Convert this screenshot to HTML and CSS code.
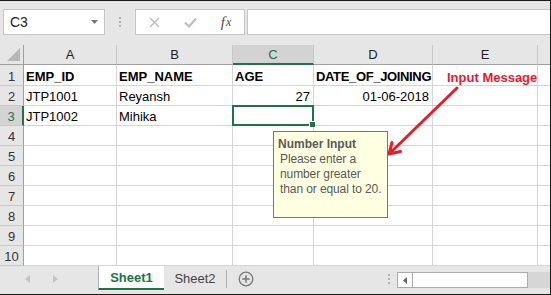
FILE: index.html
```html
<!DOCTYPE html>
<html lang="en">
<head>
    <meta charset="UTF-8">
    <title>Data Validation - Input Message</title>
    <link rel="stylesheet" href="styles.css">
</head>
<body>
    <div class="frame">
        <div class="formula-bar">
            <div class="name-box">
                <span>C3</span>
                <svg class="caret" width="7" height="4" viewBox="0 0 7 4"><polygon points="0,0 7,0 3.5,4" fill="#777"/></svg>
            </div>
            <div class="grip"><i></i><i></i><i></i></div>
            <div class="fn-buttons">
                <span class="slot">
                    <svg width="11" height="11" viewBox="0 0 11 11"><path d="M1 1 L10 10 M10 1 L1 10" stroke="#bcbcbc" stroke-width="1.4"/></svg>
                </span>
                <span class="slot">
                    <svg width="13" height="11" viewBox="0 0 13 11"><path d="M1 5.5 L5 9.5 L12 1.5" stroke="#bcbcbc" stroke-width="2" fill="none"/></svg>
                </span>
                <span class="slot fx">f<small>x</small></span>
            </div>
            <div class="formula-input"></div>
        </div>

        <div class="sheet">
            <div class="corner">
                <svg width="24" height="20" viewBox="0 0 24 20"><polygon points="20,3 20,16 7,16" fill="#b7b7b7"/></svg>
            </div>
            <div class="col-head">A</div>
            <div class="col-head">B</div>
            <div class="col-head active">C</div>
            <div class="col-head">D</div>
            <div class="col-head">E</div>
            <div class="col-head last"></div>

            <div class="row-head">1</div>
            <div class="cell bold">EMP_ID</div>
            <div class="cell bold">EMP_NAME</div>
            <div class="cell bold">AGE</div>
            <div class="cell bold tight">DATE_OF_JOINING</div>
            <div class="cell"></div>
            <div class="cell last"></div>

            <div class="row-head">2</div>
            <div class="cell">JTP1001</div>
            <div class="cell">Reyansh</div>
            <div class="cell num">27</div>
            <div class="cell num">01-06-2018</div>
            <div class="cell"></div>
            <div class="cell last"></div>

            <div class="row-head active">3</div>
            <div class="cell">JTP1002</div>
            <div class="cell">Mihika</div>
            <div class="cell selected"><span class="sel-box"><span class="handle"></span></span></div>
            <div class="cell"></div>
            <div class="cell"></div>
            <div class="cell last"></div>

            <div class="row-head">4</div>
            <div class="cell"></div><div class="cell"></div><div class="cell"></div><div class="cell"></div><div class="cell"></div><div class="cell last"></div>
            <div class="row-head">5</div>
            <div class="cell"></div><div class="cell"></div><div class="cell"></div><div class="cell"></div><div class="cell"></div><div class="cell last"></div>
            <div class="row-head">6</div>
            <div class="cell"></div><div class="cell"></div><div class="cell"></div><div class="cell"></div><div class="cell"></div><div class="cell last"></div>
            <div class="row-head">7</div>
            <div class="cell"></div><div class="cell"></div><div class="cell"></div><div class="cell"></div><div class="cell"></div><div class="cell last"></div>
            <div class="row-head">8</div>
            <div class="cell"></div><div class="cell"></div><div class="cell"></div><div class="cell"></div><div class="cell"></div><div class="cell last"></div>
            <div class="row-head">9</div>
            <div class="cell"></div><div class="cell"></div><div class="cell"></div><div class="cell"></div><div class="cell"></div><div class="cell last"></div>
            <div class="row-head">10</div>
            <div class="cell"></div><div class="cell"></div><div class="cell"></div><div class="cell"></div><div class="cell"></div><div class="cell last"></div>
        </div>

        <div class="tab-bar">
            <div class="tab-nav">
                <svg width="5" height="8" viewBox="0 0 5 8"><polygon points="5,0 5,8 0,4" fill="#c3c3c3"/></svg>
                <svg width="5" height="8" viewBox="0 0 5 8"><polygon points="0,0 0,8 5,4" fill="#c3c3c3"/></svg>
            </div>
            <div class="tab current">Sheet1</div>
            <div class="tab">Sheet2</div>
            <div class="add-sheet">
                <svg width="16" height="16" viewBox="0 0 16 16"><circle cx="8" cy="8" r="6.8" fill="none" stroke="#7a7a7a" stroke-width="1.3"/><path d="M8 4.2 V11.8 M4.2 8 H11.8" stroke="#7a7a7a" stroke-width="1.6"/></svg>
            </div>
            <div class="spacer"></div>
            <div class="grip small"><i></i><i></i><i></i></div>
            <div class="hscroll">
                <span class="scroll-btn">
                    <svg width="4" height="7" viewBox="0 0 4 7"><polygon points="4,0 4,7 0,3.5" fill="#666"/></svg>
                </span>
                <span class="thumb"></span>
                <span class="track"></span>
            </div>
        </div>

        <div class="tooltip">
            <b>Number Input</b>
            <p>Please enter a<br>number greater<br>than or equal to 20.</p>
        </div>

        <div class="note">Input Message</div>
        <svg class="arrow" width="551" height="295" viewBox="0 0 551 295">
            <path d="M457 88 L389 154 M389 154 L392 142.5 M389 154 L400.5 151.5" stroke="#e61d2b" stroke-width="3" stroke-linecap="round" fill="none"/>
        </svg>
    </div>
</body>
</html>
```

FILE: styles.css
```css
* {
    box-sizing: border-box;
}
body {
    margin: 0;
    font-family: 'Liberation Sans', Arial, sans-serif;
    font-size: 13px;
    color: #000;
    background-color: #fff;
}
.frame {
    position: relative;
    width: 551px;
    height: 295px;
    background-color: #e6e6e6;
    border-top: 1px solid #1a1a1a;
    border-right: 1px solid #1a1a1a;
    border-bottom: 1px solid #1a1a1a;
    overflow: hidden;
}

/* formula bar */
.formula-bar {
    display: flex;
    align-items: flex-start;
    height: 44px;
    padding-top: 8px;
}
.name-box {
    display: flex;
    align-items: center;
    justify-content: space-between;
    width: 102px;
    height: 26px;
    margin-left: 3px;
    padding: 0 6px 0 6px;
    background-color: #fff;
    border: 1px solid #c6c6c6;
    color: #222;
    font-size: 14px;
}
.grip {
    display: flex;
    flex-direction: column;
    align-items: center;
    justify-content: center;
    gap: 2px;
    width: 30px;
    height: 26px;
}
.grip i {
    display: block;
    width: 2px;
    height: 2px;
    background-color: #b3b3b3;
}
.fn-buttons {
    display: flex;
    width: 110px;
    height: 26px;
    background-color: #fff;
    border: 1px solid #c6c6c6;
}
.slot {
    display: flex;
    align-items: center;
    justify-content: center;
    width: 36px;
}
.fx {
    font-family: 'Liberation Serif', serif;
    font-style: italic;
    font-size: 15px;
    color: #4a4a4a;
}
.fx small {
    font-size: 12px;
    margin-left: 1px;
}
.formula-input {
    flex: 1;
    height: 26px;
    margin-left: 2px;
    background-color: #fff;
    border: 1px solid #c6c6c6;
    border-right: none;
}

/* grid */
.sheet {
    display: grid;
    grid-template-columns: 24px 93px 116px 81px 119px 105px 1fr;
    grid-template-rows: 20px 21px repeat(9, 20px);
    background-color: #fff;
}
.corner,
.col-head {
    background-color: #e6e6e6;
    border-right: 1px solid #c8c8c8;
    border-bottom: 1px solid #9f9f9f;
}
.corner {
    border-right: 1px solid #9f9f9f;
}
.col-head {
    display: flex;
    align-items: center;
    justify-content: center;
    color: #222;
    font-size: 13px;
}
.col-head.active {
    background-color: #d3d3d3;
    color: #217346;
    border-bottom: 2px solid #217346;
}
.col-head.last {
    border-right: none;
}
.row-head {
    display: flex;
    align-items: center;
    justify-content: center;
    background-color: #e6e6e6;
    border-right: 1px solid #9f9f9f;
    border-bottom: 1px solid #c8c8c8;
    color: #333;
    font-size: 13px;
    padding-top: 2px;
}
.row-head.active {
    background-color: #d3d3d3;
    color: #217346;
    border-right: 2px solid #217346;
}
.cell {
    display: flex;
    align-items: center;
    padding: 2px 2px 0;
    border-right: 1px solid #d4d4d4;
    border-bottom: 1px solid #d4d4d4;
    white-space: nowrap;
}
.cell.last {
    border-right: none;
}
.bold {
    font-weight: bold;
}
.tight {
    letter-spacing: -0.35px;
}
.num {
    justify-content: flex-end;
    padding-right: 3px;
}
.selected {
    position: relative;
}
.sel-box {
    position: absolute;
    top: -1px;
    left: -1px;
    right: -1px;
    bottom: -1px;
    border: 2px solid #217346;
}
.handle {
    position: absolute;
    right: -3px;
    bottom: -3px;
    width: 6px;
    height: 6px;
    background-color: #217346;
    border-left: 1px solid #fff;
    border-top: 1px solid #fff;
}

/* sheet tabs */
.tab-bar {
    display: flex;
    align-items: flex-start;
    height: 28px;
    background-color: #e6e6e6;
}
.tab-nav {
    display: flex;
    align-items: center;
    gap: 23px;
    width: 98px;
    height: 26px;
    padding-left: 25px;
}
.tab {
    display: flex;
    align-items: center;
    justify-content: center;
    height: 24px;
    color: #444;
}
.tab.current {
    width: 66px;
    background-color: #fff;
    border-left: 1px solid #b5b5b5;
    border-bottom: 2px solid #217346;
    color: #217346;
    font-weight: bold;
}
.tab:not(.current) {
    width: 63px;
    border-right: 1px solid #b0b0b0;
    margin-top: 4px;
    height: 18px;
    padding-bottom: 2px;
}
.add-sheet {
    display: flex;
    align-items: center;
    justify-content: center;
    width: 28px;
    height: 25px;
    margin-left: 5px;
}
.spacer {
    flex: 1;
}
.grip.small {
    width: 16px;
    height: 26px;
    margin-right: 0;
}
.hscroll {
    display: flex;
    width: 153px;
    height: 16px;
    margin-top: 6px;
}
.scroll-btn {
    display: flex;
    align-items: center;
    justify-content: center;
    width: 16px;
    background-color: #fff;
    border: 1px solid #ababab;
}
.thumb {
    width: 115px;
    background-color: #fff;
    border: 1px solid #ababab;
    border-left: none;
}
.track {
    flex: 1;
    background-color: #d6d6d6;
}

/* overlays */
.tooltip {
    position: absolute;
    left: 273px;
    top: 130px;
    width: 115px;
    height: 87px;
    padding: 5px 0 0 4px;
    background-color: #ffffe1;
    border: 1px solid #777;
    color: #595959;
    font-size: 12px;
    line-height: 15px;
    white-space: nowrap;
}
.tooltip b {
    display: block;
}
.tooltip p {
    margin: 0;
    padding-left: 2px;
    letter-spacing: -0.1px;
}
.note {
    position: absolute;
    left: 447px;
    top: 69px;
    color: #e8192f;
    font-weight: bold;
    font-size: 13px;
}
.arrow {
    position: absolute;
    left: 0;
    top: -1px;
    pointer-events: none;
}
```
